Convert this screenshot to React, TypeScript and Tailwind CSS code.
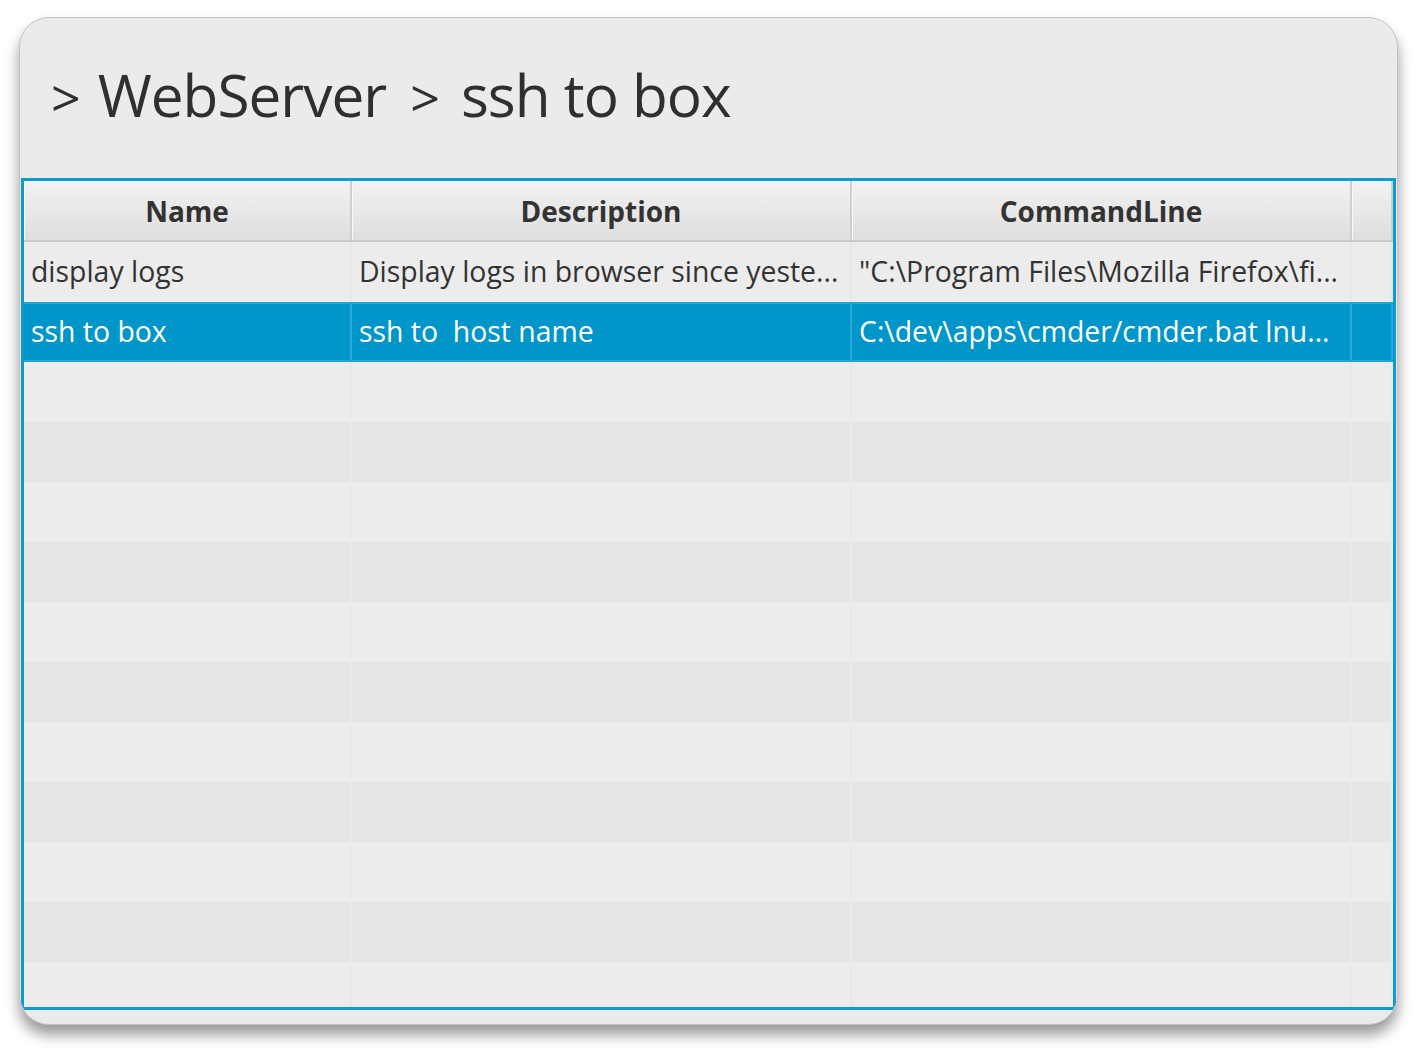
const font = { fontFamily: '"Open Sans", "Noto Sans", sans-serif' };

const cols = ["w-[328px]", "w-[500px]", "w-[500px]", "flex-1"];

const rows = [
  { name: "display logs", desc: "Display logs in browser since yeste...", cmd: "\"C:\\Program Files\\Mozilla Firefox\\fi..." },
  { name: "ssh to box", desc: "ssh to  host name", cmd: "C:\\dev\\apps\\cmder/cmder.bat lnu...", selected: true },
];

function HeaderCell({ label, idx }: { label: string; idx: number }) {
  return (
    <div
      className={`${cols[idx]} h-full flex items-center justify-center border-r-2 border-[#cfcfcf] bg-gradient-to-b from-[#f2f2f2] to-[#dedede] shadow-[inset_1px_1px_0_#fafafa] text-[28px] font-bold text-[#333] whitespace-pre`}
    >
      {label}
    </div>
  );
}

function DataRow({ name, desc, cmd, selected }: { name: string; desc: string; cmd: string; selected?: boolean }) {
  const vals = [name, desc, cmd, ""];
  return (
    <div
      className={
        selected
          ? "flex h-[60px] shrink-0 bg-[#0096c9] text-white border-y-2 border-[#23a6d6]"
          : "flex h-[60px] shrink-0 bg-[#ececec] text-[#333]"
      }
    >
      {vals.map((v, i) => (
        <div
          key={i}
          className={`${cols[i]} h-full flex items-center pl-[7px] pr-2 pb-[2px] overflow-hidden whitespace-pre text-[28.4px] ${
            selected ? "border-r-2 border-[#2aa8d8]" : "border-r-2 border-[#e6e6e6]"
          }`}
        >
          {v}
        </div>
      ))}
    </div>
  );
}

function EmptyRow({ dark }: { dark: boolean }) {
  return (
    <div className={`flex h-[60px] shrink-0 ${dark ? "bg-[#e5e5e5]" : "bg-[#ececec]"}`}>
      {cols.map((c, i) => (
        <div key={i} className={`${c} h-full border-r-2 ${dark ? "border-[#ebebeb]" : "border-[#e8e8e8]"}`} />
      ))}
    </div>
  );
}

export default function App() {
  return (
    <div className="w-[1416px] h-[1056px] bg-white pt-[17px] pl-[19px]" style={font}>
      <div className="w-[1379px] h-[1008px] rounded-[30px] border border-[#c2c2c2] bg-[#ebebeb] shadow-[0_10px_14px_rgba(0,0,0,0.4)] flex flex-col overflow-hidden">
        <div className="h-[160px] shrink-0 flex items-center pl-[31px] pb-[6px] text-[58.5px] text-[#2f2f2f] tracking-[-1px]">
          <span className="text-[52px] mr-[18px] mt-[4px]">&gt;</span>
          <span>WebServer</span>
          <span className="text-[52px] ml-[24px] mr-[22px] mt-[4px]">&gt;</span>
          <span>ssh to box</span>
        </div>
        <div className="mx-[1px] h-[832px] shrink-0 border-[3px] border-[#0a9bd0] flex flex-col overflow-hidden">
          <div className="flex h-[61px] shrink-0 border-b-2 border-[#c9c9c9]">
            <HeaderCell label="Name" idx={0} />
            <HeaderCell label="Description" idx={1} />
            <HeaderCell label="CommandLine" idx={2} />
            <HeaderCell label="" idx={3} />
          </div>
          {rows.map((r, i) => (
            <DataRow key={i} {...r} />
          ))}
          {Array.from({ length: 11 }).map((_, i) => (
            <EmptyRow key={i} dark={i % 2 === 1} />
          ))}
        </div>
      </div>
    </div>
  );
}
